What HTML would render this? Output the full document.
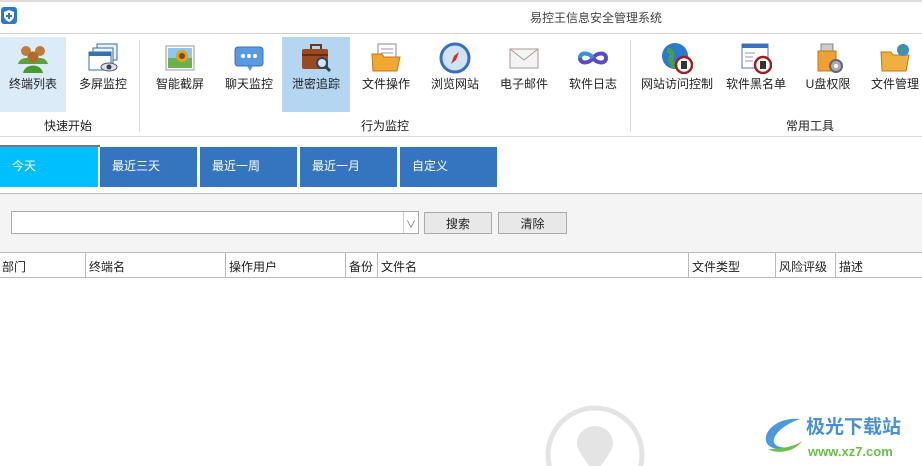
<!DOCTYPE html><html><head><meta charset="utf-8"><style>
*{margin:0;padding:0;box-sizing:border-box}
html,body{width:922px;height:466px;overflow:hidden}
body{background:#fff;font-family:"Liberation Sans","Noto Sans CJK SC","WenQuanYi Zen Hei",sans-serif;font-size:12px;color:#222;position:relative}
.a{position:absolute}
.btn{position:absolute;top:37px;height:75px;text-align:center;font-size:12px}
.btn .ic{position:absolute;top:5px;left:50%;margin-left:-16px;width:32px;height:32px}
.btn span{position:absolute;top:38px;left:0;right:0;white-space:nowrap}
.tab{position:absolute;top:147px;height:40px;width:97px;color:#fff;font-size:12px;padding:10px 0 0 12px;background:#3575c0}
.col{position:absolute;top:253px;height:25px;border-left:1px solid #bbb;padding:5px 0 0 3px;font-size:12px;color:#222}
</style></head><body>
<div class="a" style="left:0;top:0;width:922px;height:2px;background:#ddd"></div>
<svg class="a" style="left:1px;top:7px" width="16" height="17"><rect width="16" height="17" rx="3" fill="#2a78d0"/><path d="M8 3 L13 5 V9 C13 12 10 14 8 15 C6 14 3 12 3 9 V5Z" fill="#fff"/><path d="M8 6v6M5 9h6" stroke="#2a78d0" stroke-width="2"/></svg>
<div class="a" style="left:530px;top:9px;font-size:12px;color:#444">易控王信息安全管理系统</div>
<div class="a" style="left:0;top:33px;width:922px;height:1px;background:#d0d0d0"></div>
<div class="a" style="left:0;top:37px;width:66px;height:75px;background:#dcebf8"></div>
<div class="a" style="left:282px;top:37px;width:68px;height:75px;background:#b4d6f0"></div>
<div class="a" style="left:139px;top:40px;width:1px;height:92px;background:#dcdcdc"></div>
<div class="a" style="left:630px;top:40px;width:1px;height:92px;background:#dcdcdc"></div>

<div class="btn" style="left:0;width:66px"><svg class="ic" viewBox="0 0 32 32"><circle cx="9" cy="9" r="5" fill="#c07a3a"/><circle cx="23" cy="9" r="5" fill="#c07a3a"/><path d="M1 22c2-8 14-8 16 0z M15 22c2-8 14-8 16 0z" fill="#5aa33a"/><circle cx="16" cy="15" r="5.5" fill="#b06a2a"/><path d="M6 31c2-10 18-10 20 0z" fill="#4a9a2a"/></svg><span>终端列表</span></div>
<div class="btn" style="left:70px;width:66px"><svg class="ic" viewBox="0 0 32 32"><rect x="10" y="2" width="20" height="16" fill="#eaf2fb" stroke="#3a6ea8"/><rect x="6" y="6" width="20" height="16" fill="#eaf2fb" stroke="#3a6ea8"/><rect x="2" y="10" width="22" height="18" fill="#fff" stroke="#3a6ea8"/><rect x="2" y="10" width="22" height="4" fill="#3a6ea8"/><ellipse cx="22" cy="25" rx="8" ry="4" fill="#dde" stroke="#556"/><circle cx="22" cy="25" r="2.5" fill="#345"/></svg><span>多屏监控</span></div>
<div class="btn" style="left:147px;width:66px"><svg class="ic" viewBox="0 0 32 32"><rect x="2" y="4" width="28" height="24" fill="#fff" stroke="#999"/><rect x="4" y="6" width="24" height="20" fill="#6ab04c"/><rect x="4" y="6" width="24" height="10" fill="#8cc8f0"/><circle cx="18" cy="14" r="6" fill="#e8a020"/><circle cx="18" cy="14" r="3" fill="#7a4a10"/></svg><span>智能截屏</span></div>
<div class="btn" style="left:216px;width:66px"><svg class="ic" viewBox="0 0 32 32"><rect x="2" y="5" width="28" height="19" rx="3" fill="#5a9ae0" stroke="#3a70b8"/><path d="M14 24l3 5 3-5z" fill="#5a9ae0"/><circle cx="10" cy="14" r="2" fill="#fff"/><circle cx="16" cy="14" r="2" fill="#fff"/><circle cx="22" cy="14" r="2" fill="#fff"/></svg><span>聊天监控</span></div>
<div class="btn" style="left:282px;width:68px"><svg class="ic" viewBox="0 0 32 32"><rect x="11" y="3" width="10" height="5" fill="none" stroke="#6a3a1a" stroke-width="2"/><rect x="2" y="7" width="26" height="20" rx="2" fill="#9a4a20"/><rect x="2" y="12" width="26" height="2" fill="#6a2a10"/><circle cx="22" cy="21" r="5" fill="#cfe6ff" stroke="#345" stroke-width="2"/><path d="M25 24l5 5" stroke="#345" stroke-width="3"/></svg><span>泄密追踪</span></div>
<div class="btn" style="left:353px;width:66px"><svg class="ic" viewBox="0 0 32 32"><rect x="8" y="2" width="18" height="20" fill="#fff" stroke="#889"/><path d="M11 7h12M11 11h12M11 15h12" stroke="#99a"/><path d="M2 12h10l2 3h16l-3 14H3z" fill="#f0a830" stroke="#c07818"/></svg><span>文件操作</span></div>
<div class="btn" style="left:422px;width:66px"><svg class="ic" viewBox="0 0 32 32"><circle cx="16" cy="16" r="14" fill="#cfe2f6" stroke="#3a6ec0" stroke-width="3"/><path d="M20 10l-3 8-5 4 3-8z" fill="#d03020"/></svg><span>浏览网站</span></div>
<div class="btn" style="left:491px;width:66px"><svg class="ic" viewBox="0 0 32 32"><rect x="2" y="7" width="28" height="19" fill="#f4f4f4" stroke="#a99"/><path d="M2 7l14 11 14-11" fill="none" stroke="#a99"/></svg><span>电子邮件</span></div>
<div class="btn" style="left:560px;width:66px"><svg class="ic" viewBox="0 0 32 32"><path d="M16 16c-4-6-13-6-13 0s9 6 13 0c4-6 13-6 13 0s-9 6-13 0" fill="none" stroke="#5a4ac8" stroke-width="4"/><path d="M3 16c0-6 9-6 13 0" fill="none" stroke="#3a90e0" stroke-width="4"/></svg><span>软件日志</span></div>
<div class="btn" style="left:640px;width:74px"><svg class="ic" viewBox="0 0 32 32"><circle cx="14" cy="14" r="13" fill="#2a7ad0"/><path d="M6 8c4 0 6 4 4 8s4 6 2 10" fill="none" stroke="#4aa040" stroke-width="5"/><circle cx="23" cy="23" r="8" fill="#fff" stroke="#a02020" stroke-width="2.5"/><rect x="20" y="19" width="6" height="8" fill="#333"/></svg><span>网站访问控制</span></div>
<div class="btn" style="left:722px;width:68px"><svg class="ic" viewBox="0 0 32 32"><rect x="2" y="2" width="26" height="24" fill="#fff" stroke="#5a7ab0"/><rect x="2" y="2" width="26" height="4" fill="#3a70c0"/><path d="M5 11h10M5 15h8M5 19h8" stroke="#99a"/><circle cx="23" cy="23" r="8" fill="#fff" stroke="#a02020" stroke-width="2.5"/><rect x="20" y="19" width="6" height="8" fill="#333"/></svg><span>软件黑名单</span></div>
<div class="btn" style="left:796px;width:64px"><svg class="ic" viewBox="0 0 32 32"><rect x="9" y="2" width="12" height="8" fill="#ccc" stroke="#888"/><rect x="6" y="9" width="18" height="20" fill="#f0a030" stroke="#c07818"/><circle cx="24" cy="24" r="6" fill="#aab" stroke="#667" stroke-width="2"/><circle cx="24" cy="24" r="2" fill="#fff"/></svg><span>U盘权限</span></div>
<div class="btn" style="left:864px;width:62px"><svg class="ic" viewBox="0 0 32 32"><path d="M2 10h10l2 3h16l-3 16H3z" fill="#f0b040" stroke="#c07818"/><circle cx="24" cy="8" r="6" fill="#3a8ad8"/><path d="M21 5c2 1 3 3 2 6" stroke="#4aa040" stroke-width="3" fill="none"/></svg><span>文件管理</span></div>

<div class="a" style="left:44px;top:117px">快速开始</div>
<div class="a" style="left:361px;top:117px">行为监控</div>
<div class="a" style="left:786px;top:117px">常用工具</div>
<div class="a" style="left:0;top:136px;width:922px;height:1px;background:#d8d8d8"></div>
<div class="a" style="left:0;top:145px;width:100px;height:2px;background:#777"></div>

<div class="tab" style="left:0;background:#00bfff;width:98px">今天</div>
<div class="tab" style="left:100px">最近三天</div>
<div class="tab" style="left:200px">最近一周</div>
<div class="tab" style="left:300px">最近一月</div>
<div class="tab" style="left:400px">自定义</div>

<div class="a" style="left:0;top:193px;width:922px;height:60px;background:#f4f4f4;border-top:1px solid #bbb;border-bottom:1px solid #bbb"></div>
<div class="a" style="left:11px;top:211px;width:408px;height:23px;background:#fff;border:1px solid #aaa"></div>
<div class="a" style="left:403px;top:212px;width:15px;height:21px;border-left:1px solid #ccc;color:#666;font-size:10px;text-align:center;padding-top:4px">∨</div>
<div class="a" style="left:424px;top:212px;width:68px;height:22px;background:#e8e8e8;border:1px solid #aaa;text-align:center;padding-top:2px">搜索</div>
<div class="a" style="left:498px;top:212px;width:69px;height:22px;background:#e8e8e8;border:1px solid #aaa;text-align:center;padding-top:2px">清除</div>

<div class="col" style="left:-1px;border:none;padding-left:3px">部门</div>
<div class="col" style="left:85px">终端名</div>
<div class="col" style="left:225px">操作用户</div>
<div class="col" style="left:345px">备份</div>
<div class="col" style="left:377px">文件名</div>
<div class="col" style="left:688px">文件类型</div>
<div class="col" style="left:775px">风险评级</div>
<div class="col" style="left:835px">描述</div>
<div class="a" style="left:0;top:277px;width:922px;height:1px;background:#bbb"></div>

<svg class="a" style="left:540px;top:400px" width="110" height="66"><circle cx="55" cy="55" r="47" fill="none" stroke="#e4e4e4" stroke-width="5"/><path d="M55 26c-10 0-18 8-18 17 0 8 8 16 12 23h12c4-7 12-15 12-23 0-9-8-17-18-17z" fill="#e4e4e4"/></svg>
<svg class="a" style="left:760px;top:415px" width="48" height="42"><path d="M40 4C20 2 4 14 6 26c2 8 14 10 24 6-10 2-18-2-16-8 2-8 14-16 26-20z" fill="#4a9ae0"/><path d="M8 34c10 6 28 2 34-8-8 6-22 8-34 8z" fill="#6cc04a"/><path d="M10 38c8 2 18 0 26-4-8 4-18 6-26 4z" fill="#f0c030"/></svg>
<div class="a" style="left:806px;top:416px;font-size:19px;font-weight:bold;color:#4a90d8;line-height:24px">极光下载站</div>
<div class="a" style="left:808px;top:444px;font-size:13px;color:#6cc04a;font-weight:bold;line-height:16px">www.xz7.com</div>
</body></html>
